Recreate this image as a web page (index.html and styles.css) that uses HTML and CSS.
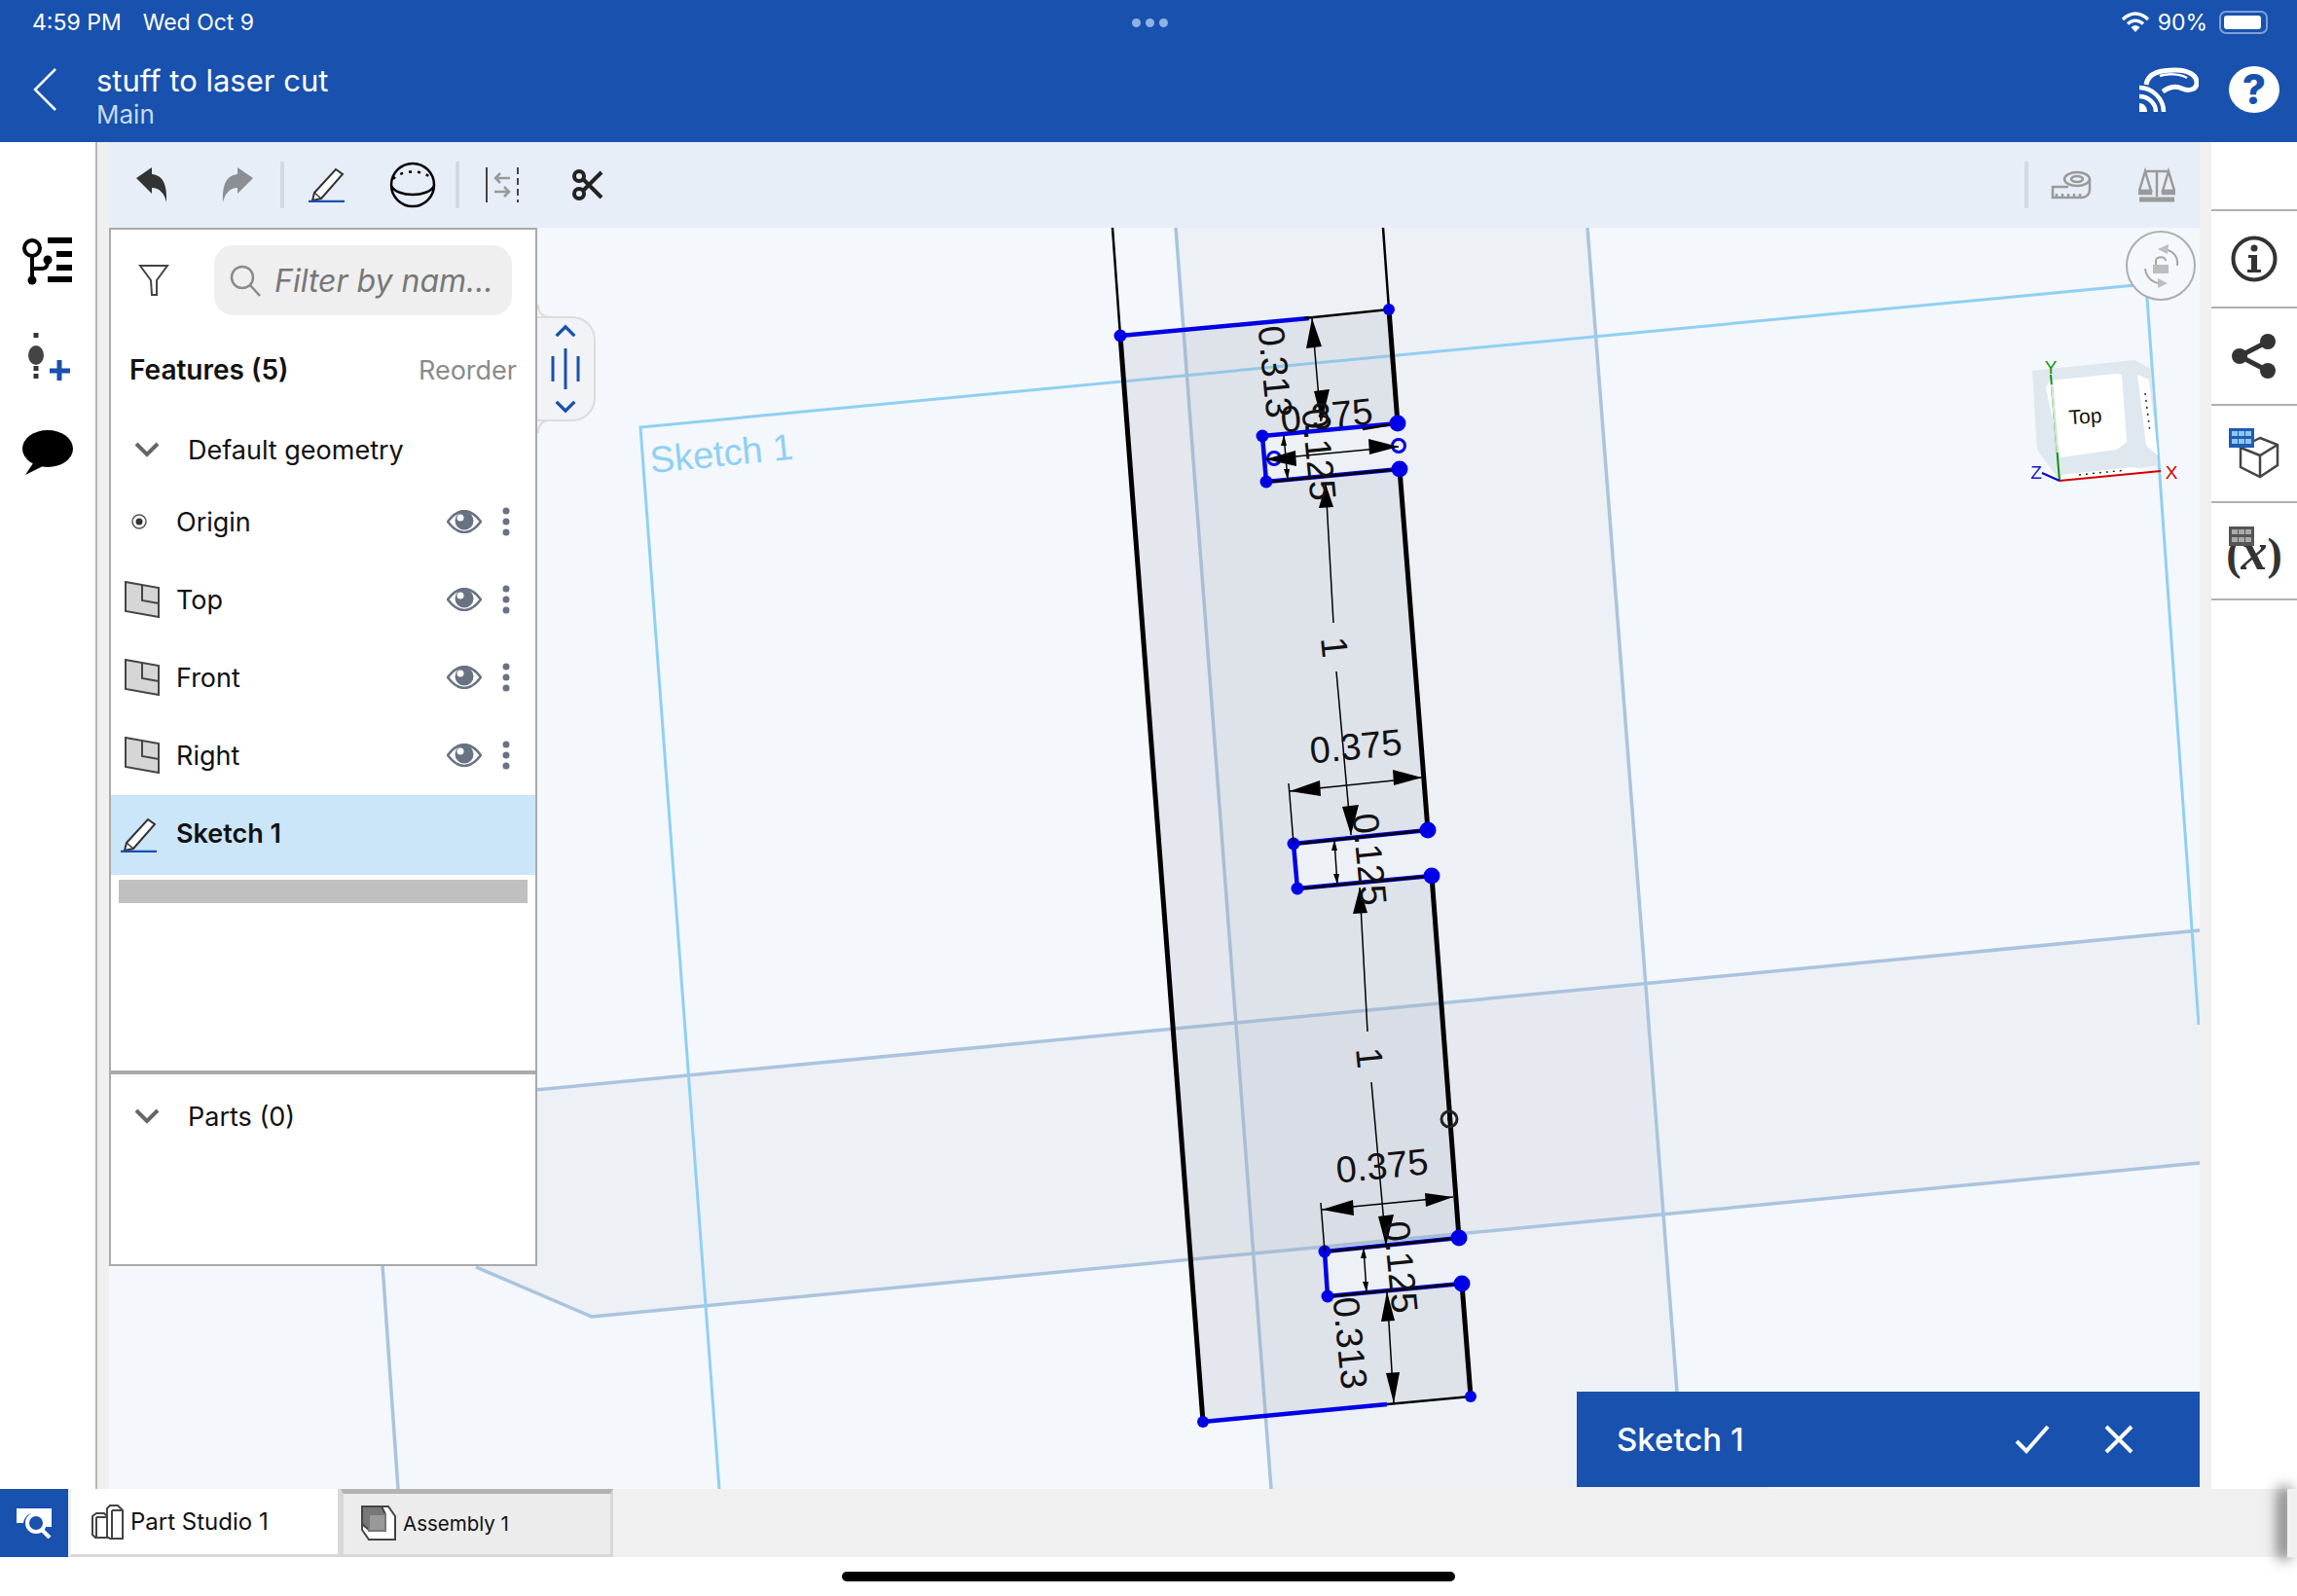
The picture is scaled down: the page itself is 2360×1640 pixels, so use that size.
FILE: index.html
```html
<!DOCTYPE html>
<html lang="en">
<head>
    <meta charset="UTF-8">
    <title>stuff to laser cut</title>
    <link rel="stylesheet" href="styles.css">
</head>
<body>
    <svg class="defs" width="0" height="0">
        <symbol id="eye" viewBox="0 0 36 24">
            <path d="M1 12C7 4 12 1 18 1s11 3 17 11c-6 8-11 11-17 11S7 20 1 12Z" fill="#fff" stroke="#687282" stroke-width="2.500"/>
            <circle cx="18" cy="11" r="9.500" fill="#687282"/>
            <circle cx="14" cy="8" r="3.500" fill="#fff"/>
        </symbol>
        <symbol id="dots" viewBox="0 0 8 30">
            <circle cx="4" cy="4" r="3.500" fill="#687282"/>
            <circle cx="4" cy="15" r="3.500" fill="#687282"/>
            <circle cx="4" cy="26" r="3.500" fill="#687282"/>
        </symbol>
        <symbol id="plane" viewBox="0 0 36 38">
            <path d="M1 1 35 7V37L1 31Z" fill="#d6d6d6" stroke="#444" stroke-width="2"/>
            <path d="M18 4V20L35 23" fill="none" stroke="#444" stroke-width="2"/>
        </symbol>
        <symbol id="pencil" viewBox="0 0 38 36">
            <path d="M6 26 28 2l7 5-22 25-9 2Z" fill="#fff" stroke="#333" stroke-width="2"/>
            <path d="M6 26l7 6" stroke="#333" stroke-width="1.500"/>
            <path d="M0 35H37" stroke="#1851ae" stroke-width="2.500"/>
        </symbol>
        <symbol id="chevron" viewBox="0 0 26 16">
            <path d="M2 2 13 13 24 2" fill="none" stroke="currentColor" stroke-width="4"/>
        </symbol>
    </svg>

    <div class="app">
        <header class="topbar">
            <div class="status">
                <div class="status-left"><span>4:59 PM</span><span>Wed Oct 9</span></div>
                <div class="status-dots"><i></i><i></i><i></i></div>
                <div class="status-right">
                    <svg width="30" height="22" viewBox="0 0 30 22"><path d="M2 8C10 0 20 0 28 8M7 12.500C12 8 18 8 23 12.500" fill="none" stroke="#fff" stroke-width="3.400"/><path d="M10.500 16C13 13.500 17 13.500 19.500 16L15 21Z" fill="#fff"/></svg>
                    <span>90%</span>
                    <div class="battery"><b></b></div>
                </div>
            </div>
            <div class="titlebar">
                <svg class="back" width="26" height="46" viewBox="0 0 26 46"><path d="M24 2 3 23 24 44" fill="none" stroke="#fff" stroke-width="2.500"/></svg>
                <div class="doc">
                    <div class="doc-name">stuff to laser cut</div>
                    <div class="doc-branch">Main</div>
                </div>
                <svg class="cast" width="62" height="46" viewBox="0 0 62 46">
                    <path d="M8 18C10 5 24 3 38 3c13 0 22 5 22 13 0 7-8 9-15 6-7-3-12-2-20 3" fill="none" stroke="#fff" stroke-width="5"/>
                    <path d="M22 9C30 6 44 7 50 11" fill="none" stroke="#fff" stroke-width="2.500"/>
                    <path d="M1 21C14 21 26 32 26 46M1 30C10 30 18 37 18 46" fill="none" stroke="#fff" stroke-width="4.500"/>
                    <path d="M1 37C6 37 9 41 9 46H1Z" fill="#fff"/>
                </svg>
                <div class="help">?</div>
            </div>
        </header>

        <main class="workspace">
            <nav class="left-rail">
                <svg width="54" height="50" viewBox="0 0 54 50">
                    <circle cx="11" cy="12" r="8" fill="none" stroke="#000" stroke-width="4"/>
                    <path d="M11 20V45M11 33H22C26 33 27 30 27 24" fill="none" stroke="#000" stroke-width="4"/>
                    <circle cx="11" cy="45" r="4.500"/><circle cx="27" cy="24" r="4.500"/>
                    <path d="M27 1H52V7H27ZM36 15H52V21H36ZM36 29H52V35H36ZM27 41H52V47H27Z"/>
                </svg>
                <svg width="54" height="50" viewBox="0 0 54 50">
                    <path d="M15 0V7M15 34V50" stroke="#333" stroke-width="5" stroke-dasharray="5 3"/>
                    <ellipse cx="15" cy="23" rx="8" ry="10" fill="#444"/>
                    <path d="M39 28V49M29 39H50" stroke="#1851ae" stroke-width="5"/>
                </svg>
                <svg width="54" height="48" viewBox="0 0 54 48">
                    <ellipse cx="27" cy="20" rx="26" ry="19"/>
                    <path d="M14 32 4 47 26 36Z"/>
                </svg>
            </nav>
            <div class="gutter"></div>

            <section class="center">
                <div class="toolbar">
                    <div class="tool">
                        <svg width="34" height="38" viewBox="0 0 34 38"><path d="M1 12 17 1V8C28 9 33 18 32 37 30 28 25 22 17 22V28Z" fill="#333"/></svg>
                    </div>
                    <div class="tool">
                        <svg width="34" height="38" viewBox="0 0 34 38"><path d="M33 12 17 1V8C6 9 1 18 2 37 4 28 9 22 17 22V28Z" fill="#8b8e92"/></svg>
                    </div>
                    <div class="tool-sep"></div>
                    <div class="tool"><svg width="38" height="36"><use href="#pencil"/></svg></div>
                    <div class="tool">
                        <svg width="48" height="48" viewBox="0 0 48 48" fill="none" stroke="#000" stroke-width="2.500">
                            <circle cx="24" cy="24" r="22"/>
                            <path d="M2 25C8 37 40 37 46 25"/>
                            <path d="M4 18C12 8 36 8 44 18" stroke-dasharray="3 6"/>
                        </svg>
                    </div>
                    <div class="tool-sep"></div>
                    <div class="tool">
                        <svg width="36" height="38" viewBox="0 0 36 38" fill="none">
                            <path d="M2 1V37" stroke="#444" stroke-width="2"/>
                            <path d="M34 1V37" stroke="#444" stroke-width="2" stroke-dasharray="7 4"/>
                            <path d="M26 12H11M16 7l-5 5 5 5M10 26H25M20 21l5 5-5 5" stroke="#999" stroke-width="2.500"/>
                        </svg>
                    </div>
                    <div class="tool">
                        <svg width="32" height="32" viewBox="0 0 32 32" fill="none" stroke="#222" stroke-width="4">
                            <circle cx="7" cy="7" r="5"/><circle cx="7" cy="25" r="5"/>
                            <path d="M11 10 30 29M11 22 30 3"/>
                        </svg>
                    </div>
                    <div class="toolbar-right">
                        <div class="tool-sep"></div>
                        <div class="tool">
                            <svg width="42" height="30" viewBox="0 0 42 30" fill="none" stroke="#9a9a9a" stroke-width="2.500">
                                <ellipse cx="27" cy="9" rx="13" ry="7"/>
                                <ellipse cx="27" cy="9" rx="6" ry="3"/>
                                <path d="M40 9V20C40 25 36 28 32 28H2V17H18M6 28V24M12 28V24M18 28V24M24 28V24M30 28V24"/>
                            </svg>
                        </div>
                        <div class="tool">
                            <svg width="38" height="36" viewBox="0 0 38 36" fill="none" stroke="#9a9a9a" stroke-width="2.500">
                                <path d="M19 3V30M6 4H32M1 24 7 4 13 24ZM25 24 31 4 37 24Z"/>
                                <path d="M1 24H13V27H1ZM25 24H37V27H25Z" fill="#9a9a9a"/>
                                <path d="M1 33H37" stroke-width="5"/>
                            </svg>
                        </div>
                    </div>
                </div>

                <div class="canvas">
                    <svg class="scene" viewBox="112 234 2148 1296">
                        <!-- planes -->
                        <path class="shade" d="M1208 234 1306 1530H1818L1723 1430 1631 234Z"/>
                        <path class="shade" d="M300 1144 2260 956V1195L608 1353 489 1302Z"/>
                        <path class="plane-line" d="M1208 234 1306 1530M1631 234 1723 1430M300 1144 2260 956M489 1302 608 1353 2260 1195M393 1300 409 1530"/>
                        <path class="sketch-plane" d="M739 1530 658 439 2205 292 2259 1053"/>
                        <text class="plane-label" transform="translate(669 486) rotate(-5.600)">Sketch 1</text>

                        <!-- sketch profile -->
                        <path class="profile-fill" d="M1151 345 1427 318 1436 435 1297 448 1301 495 1438 482 1467 853 1329 867 1333 913 1471 900 1499 1272 1361 1286 1364 1332 1502 1319 1511 1435 1236 1461Z"/>
                        <g class="blue-edge">
                            <path d="M1151 345 1345 327M1297 448 1436 435M1297 448 1301 495 1438 482"/>
                            <path d="M1329 867 1467 853M1329 867 1333 913 1471 900"/>
                            <path d="M1361 1286 1499 1272M1361 1286 1364 1332 1502 1319"/>
                            <path d="M1236 1461 1425 1443"/>
                        </g>
                        <path class="edge-thin" d="M1143 234 1151 345M1421 234 1427 318M1340 327 1427 318M1400 441 1436 435M1305 495 1438 482M1333 867 1467 853M1337 913 1471 900M1365 1286 1499 1272M1368 1332 1502 1319M1425 1443 1511 1435"/>
                        <path class="edge-thick" d="M1151 345 1236 1461M1427 318 1436 435M1438 482 1467 853M1471 900 1499 1272M1502 1319 1511 1435"/>

                        <g class="points">
                            <circle cx="1151" cy="345" r="6.500"/><circle cx="1427" cy="318" r="6"/>
                            <circle cx="1436" cy="435" r="8.500"/><circle cx="1438" cy="482" r="8.500"/>
                            <circle cx="1297" cy="448" r="6.500"/><circle cx="1301" cy="495" r="6.500"/>
                            <circle cx="1467" cy="853" r="8.500"/><circle cx="1471" cy="900" r="8.500"/>
                            <circle cx="1329" cy="867" r="6.500"/><circle cx="1333" cy="913" r="6.500"/>
                            <circle cx="1499" cy="1272" r="8.500"/><circle cx="1502" cy="1319" r="8.500"/>
                            <circle cx="1361" cy="1286" r="6.500"/><circle cx="1364" cy="1332" r="6.500"/>
                            <circle cx="1511" cy="1435" r="6"/><circle cx="1236" cy="1461" r="6"/>
                        </g>
                        <circle class="ring-blue" cx="1437" cy="458" r="6.500"/>
                        <circle class="ring-blue" cx="1309" cy="471" r="6.500"/>
                        <circle class="ring-black" cx="1489" cy="1150" r="8"/>
                        <circle cx="1489" cy="1150" r="2"/>

                        <!-- dimensions -->
                        <path class="dim" d="M1348 327 1357 433M1300 472 1437 459M1319 447 1323 493M1362 497 1370 640M1373 690 1388 858"/>
                        <path class="dim" d="M1325 813 1461 799M1324 805 1329 867M1371 863 1374 909M1397 912 1405 1060M1409 1112 1424 1280"/>
                        <path class="dim" d="M1358 1243 1493 1230M1357 1236 1361 1286M1401 1282 1404 1328M1425 1327 1432 1442"/>
                        <path d="M1437 459 1406 451 1407 467ZM1300 472 1331 463 1332 479ZM1348 327 1342 358 1358 356ZM1358 433 1350 402 1366 400ZM1362 497 1355 522 1370 521ZM1388 858 1379 829 1396 827Z"/>
                        <path d="M1325 813 1356 802 1357 818ZM1461 799 1431 791 1432 807ZM1397 912 1390 939 1405 938ZM1424 1280 1416 1250 1432 1248Z"/>
                        <path d="M1358 1243 1390 1233 1391 1249ZM1493 1230 1464 1226 1465 1240ZM1425 1327 1419 1358 1433 1357ZM1432 1442 1424 1411 1438 1410Z"/>
                        <path d="M1319 447 1316 458 1322 458ZM1323 493 1319 482 1325 482ZM1371 863 1368 874 1374 874ZM1374 909 1370 898 1376 898ZM1401 1282 1398 1293 1404 1293ZM1404 1328 1400 1317 1406 1317Z"/>

                        <g class="dim-text">
                            <text transform="translate(1363 427) rotate(-5.600)">0.375</text>
                            <text transform="translate(1393 767) rotate(-5.600)">0.375</text>
                            <text transform="translate(1420 1198) rotate(-5.600)">0.375</text>
                            <text transform="translate(1355 467) rotate(84.400)">0.125</text>
                            <text transform="translate(1407 883) rotate(84.400)">0.125</text>
                            <text transform="translate(1439 1302) rotate(84.400)">0.125</text>
                            <text transform="translate(1310 382) rotate(84.400)">0.313</text>
                            <text transform="translate(1387 1380) rotate(84.400)">0.313</text>
                            <text transform="translate(1371 665) rotate(84.400)">1</text>
                            <text transform="translate(1407 1087) rotate(84.400)">1</text>
                        </g>

                        <!-- rotation lock -->
                        <ellipse class="lock" cx="2220" cy="273" rx="35" ry="35"/>
                        <path class="lock-arrows" d="M2222 256C2234 257 2238 265 2237 273M2204 276C2205 285 2212 292 2222 291"/>
                        <path class="lock-head" d="M2217 256 2228 251 2227 261ZM2227 291 2217 296 2217 286ZM2212 272H2228V281H2212Z"/>
                        <path class="lock-arrows" d="M2215 272V268C2215 263 2225 263 2225 268"/>

                        <!-- view cube -->
                        <path class="cube" d="M2088 381 2193 370 2210 379 2217 478 2116 494 2093 462Z"/>
                        <path class="cube-face" d="M2106 391 2174 384 2180 385 2185 454 2175 462 2117 470 2102 398Z"/>
                        <path class="cube-face" d="M2196 385 2208 390 2217 468 2205 458Z"/>
                        <path class="cube-face" d="M2118 488 2190 480 2212 484 2118 494Z"/>
                        <text class="cube-label" transform="translate(2143 435) rotate(-4)">Top</text>
                        <path class="cube-marks" d="M2204 404 2209 444M2136 488 2184 483"/>
                        <path class="axis-y" d="M2107 385 2116 494"/>
                        <path class="axis-y-fade" d="M2108 395 2114 465"/>
                        <path class="axis-x" d="M2116 494 2220 484"/>
                        <path class="axis-z" d="M2116 494 2098 486"/>
                        <text class="axis-label green" x="2107" y="384">Y</text>
                        <text class="axis-label red" x="2231" y="492">X</text>
                        <text class="axis-label navy" x="2092" y="492">Z</text>
                    </svg>

                    <aside class="panel">
                        <div class="feature-list">
                            <div class="filter-row">
                                <svg class="filter-icon" width="32" height="34" viewBox="0 0 32 34"><path d="M2 2H30L19 17V32H14L13 17Z" fill="#fff" stroke="#444" stroke-width="2"/></svg>
                                <div class="search">
                                    <svg width="34" height="34" viewBox="0 0 34 34" fill="none" stroke="#8a8a8a" stroke-width="2.500"><circle cx="14" cy="14" r="11"/><path d="M22 22 32 33"/></svg>
                                    <span>Filter by nam...</span>
                                </div>
                            </div>
                            <div class="features-head"><b>Features (5)</b><span>Reorder</span></div>
                            <div class="default-row">
                                <svg class="chev" width="26" height="16"><use href="#chevron"/></svg>
                                <span>Default geometry</span>
                            </div>
                            <div class="row">
                                <span class="row-icon"><svg width="18" height="18" viewBox="0 0 18 18"><circle cx="9" cy="9" r="7" fill="none" stroke="#555" stroke-width="1.500"/><circle cx="9" cy="9" r="3.500" fill="#333"/></svg></span>
                                <span class="row-name">Origin</span>
                                <svg class="eye" width="36" height="24"><use href="#eye"/></svg>
                                <svg class="dots" width="8" height="30"><use href="#dots"/></svg>
                            </div>
                            <div class="row">
                                <span class="row-icon plane-icon"><svg width="36" height="38"><use href="#plane"/></svg></span>
                                <span class="row-name">Top</span>
                                <svg class="eye" width="36" height="24"><use href="#eye"/></svg>
                                <svg class="dots" width="8" height="30"><use href="#dots"/></svg>
                            </div>
                            <div class="row">
                                <span class="row-icon plane-icon"><svg width="36" height="38"><use href="#plane"/></svg></span>
                                <span class="row-name">Front</span>
                                <svg class="eye" width="36" height="24"><use href="#eye"/></svg>
                                <svg class="dots" width="8" height="30"><use href="#dots"/></svg>
                            </div>
                            <div class="row">
                                <span class="row-icon plane-icon"><svg width="36" height="38"><use href="#plane"/></svg></span>
                                <span class="row-name">Right</span>
                                <svg class="eye" width="36" height="24"><use href="#eye"/></svg>
                                <svg class="dots" width="8" height="30"><use href="#dots"/></svg>
                            </div>
                            <div class="row row-active">
                                <span class="row-icon plane-icon"><svg width="38" height="36"><use href="#pencil"/></svg></span>
                                <span class="row-name">Sketch 1</span>
                            </div>
                            <div class="rollback"></div>
                        </div>
                        <div class="parts">
                            <div class="default-row">
                                <svg class="chev" width="26" height="16"><use href="#chevron"/></svg>
                                <span>Parts (0)</span>
                            </div>
                        </div>
                    </aside>

                    <div class="handle">
                        <svg class="handle-chev" width="22" height="14" viewBox="0 0 26 16"><path d="M2 14 13 3 24 14" fill="none" stroke="#1851ae" stroke-width="4"/></svg>
                        <svg width="30" height="42" viewBox="0 0 30 42"><path d="M2 8V34M15 0V42M28 8V34" fill="none" stroke="#1851ae" stroke-width="3"/></svg>
                        <svg class="handle-chev" width="22" height="14" viewBox="0 0 26 16"><path d="M2 2 13 13 24 2" fill="none" stroke="#1851ae" stroke-width="4"/></svg>
                    </div>

                    <div class="sketch-bar">
                        <span class="sketch-title">Sketch 1</span>
                        <svg width="36" height="30" viewBox="0 0 36 30"><path d="M2 17 12 27 34 2" fill="none" stroke="#fff" stroke-width="4"/></svg>
                        <svg class="sketch-close" width="30" height="30" viewBox="0 0 30 30"><path d="M2 2 28 28M28 2 2 28" fill="none" stroke="#fff" stroke-width="4"/></svg>
                    </div>
                </div>
            </section>

            <div class="gutter"></div>
            <nav class="right-rail">
                <div class="rail-cell rail-empty"></div>
                <div class="rail-cell">
                    <svg width="48" height="48" viewBox="0 0 48 48"><circle cx="24" cy="24" r="21.500" fill="none" stroke="#333" stroke-width="4"/><circle cx="24" cy="13" r="3.500" fill="#333"/><path d="M18 20H27V35H31V38H17V35H21V23H18Z" fill="#333"/></svg>
                </div>
                <div class="rail-cell">
                    <svg width="48" height="48" viewBox="0 0 48 48"><path d="M38 9 9 24 38 39" fill="none" stroke="#333" stroke-width="5"/><circle cx="38" cy="9" r="8" fill="#333"/><circle cx="9" cy="24" r="8" fill="#333"/><circle cx="38" cy="39" r="8" fill="#333"/></svg>
                </div>
                <div class="rail-cell">
                    <svg width="52" height="52" viewBox="0 0 52 52">
                        <path d="M32 10 50 17V38L32 50 12 40V20Z M12 20 32 28 50 17M32 28V50" fill="#fff" stroke="#444" stroke-width="2.500"/>
                        <rect x="0" y="0" width="26" height="20" fill="#1f5cb5"/>
                        <path d="M3 3H9V8H3ZM10 3H16V8H10ZM17 3H23V8H17ZM3 11H9V16H3ZM10 11H16V16H10ZM17 11H23V16H17Z" fill="#8fc7f2"/>
                    </svg>
                </div>
                <div class="rail-cell fx-cell">
                    <svg class="fx-grid" width="26" height="20" viewBox="0 0 26 20"><rect width="26" height="20" fill="#555"/><path d="M3 3H9V8H3ZM10 3H16V8H10ZM17 3H23V8H17ZM3 11H9V16H3ZM10 11H16V16H10ZM17 11H23V16H17Z" fill="#aaa"/></svg>
                    <span class="fx-text">(<i>x</i>)</span>
                </div>
            </nav>
        </main>

        <footer class="tabs">
            <div class="tab-search">
                <svg width="36" height="32" viewBox="0 0 36 32"><path d="M0 1H36V20H30C30 10 24 6 17 6 12 6 8 10 7 16H0Z" fill="#fff"/><circle cx="20" cy="16" r="9" fill="none" stroke="#fff" stroke-width="4"/><path d="M26 23 34 31" stroke="#fff" stroke-width="4"/></svg>
            </div>
            <div class="tab tab-on">
                <svg width="34" height="36" viewBox="0 0 34 36" fill="#fff" stroke="#444" stroke-width="2">
                    <path d="M2 12 6 9H14L17 12V34H5L2 31Z"/><path d="M6 13H17M6 13V34"/>
                    <path d="M17 4 20 1H28L33 6V35H20L17 33Z"/><path d="M22 6H33M22 6V35"/>
                </svg>
                <span>Part Studio 1</span>
            </div>
            <div class="tab tab-off">
                <svg width="36" height="36" viewBox="0 0 36 36" stroke="#444" stroke-width="2">
                    <path d="M1 1H28L35 11V35H8L1 25Z" fill="#fff"/>
                    <path d="M1 1H21L25 9V25H8L1 19Z" fill="#777"/>
                    <path d="M8 9H25V26H8Z" fill="#999" stroke="#777"/>
                </svg>
                <span>Assembly 1</span>
            </div>
            <div class="tab-edge"></div>
        </footer>
        <div class="home-strip"><div class="home-bar"></div></div>
    </div>
</body>
</html>
```

FILE: styles.css
```css
* {
    box-sizing: border-box;
}

body {
    margin: 0;
    background-color: #fff;
    font-family: Inter, "Noto Sans", sans-serif;
    color: #111;
}

.defs {
    position: absolute;
}

.app {
    display: flex;
    flex-direction: column;
    width: 2360px;
    height: 1640px;
    overflow: hidden;
}

/* Top blue bar */
.topbar {
    height: 146px;
    background-color: #1851ae;
    color: #fff;
    flex: none;
}

.status {
    display: grid;
    grid-template-columns: 1fr auto 1fr;
    align-items: center;
    height: 46px;
    padding: 0 30px 0 33px;
    font-size: 23px;
}

.status-left {
    display: flex;
    gap: 22px;
}

.status-dots {
    display: flex;
    gap: 5px;
}

.status-dots i {
    width: 9px;
    height: 9px;
    border-radius: 50%;
    background-color: #8fb2e6;
}

.status-right {
    display: flex;
    align-items: center;
    justify-content: flex-end;
    gap: 8px;
}

.battery {
    position: relative;
    width: 50px;
    height: 24px;
    margin-left: 4px;
    padding: 3px;
    border: 2px solid #7f9fd6;
    border-radius: 7px;
}

.battery b {
    display: block;
    width: 38px;
    height: 14px;
    background-color: #fff;
    border-radius: 3px;
}

.titlebar {
    display: flex;
    align-items: center;
    height: 100px;
    padding: 0 18px 8px 33px;
}

.back {
    margin-right: 40px;
}

.doc {
    flex: 1;
    padding-top: 14px;
}

.doc-name {
    font-size: 31px;
    line-height: 38px;
}

.doc-branch {
    font-size: 26px;
    line-height: 32px;
    color: #c9d8f0;
}

.cast {
    margin-right: 31px;
}

.help {
    width: 52px;
    height: 48px;
    border-radius: 50%;
    background-color: #fff;
    color: #1851ae;
    font-size: 42px;
    font-weight: 800;
    line-height: 48px;
    text-align: center;
}

/* Middle */
.workspace {
    display: flex;
    height: 1384px;
    flex: none;
}

.left-rail {
    display: flex;
    flex-direction: column;
    align-items: center;
    gap: 49px;
    width: 98px;
    padding-top: 97px;
    flex: none;
}

.gutter {
    width: 12px;
    flex: none;
    background-color: #f0f0f0;
}

.left-rail + .gutter {
    width: 14px;
    border-left: 2px solid #b5b5b5;
}

.center {
    display: flex;
    flex-direction: column;
    flex: 1;
    min-width: 0;
}

.toolbar {
    display: flex;
    align-items: center;
    height: 88px;
    flex: none;
    background-color: #e8eef7;
}

.tool {
    display: flex;
    align-items: center;
    justify-content: center;
    width: 88px;
    height: 88px;
}

.tool-sep {
    width: 4px;
    height: 48px;
    background-color: #cfdae6;
}

.toolbar-right {
    display: flex;
    align-items: center;
    margin-left: auto;
}

.canvas {
    position: relative;
    flex: 1;
    background-color: #f4f7fb;
    overflow: hidden;
}

.scene {
    position: absolute;
    left: 0;
    top: 0;
    width: 2148px;
    height: 1296px;
}

.shade {
    fill: #b4b9c8;
    fill-opacity: 0.1;
}

.plane-line {
    fill: none;
    stroke: #a9c4de;
    stroke-width: 3.500;
}

.sketch-plane {
    fill: none;
    stroke: #8fd0f3;
    stroke-width: 3;
}

.plane-label {
    font-family: "Liberation Sans", sans-serif;
    font-size: 38px;
    fill: #8fd0f3;
}

.profile-fill {
    fill: #a3acba;
    fill-opacity: 0.2;
}

.blue-edge path {
    fill: none;
    stroke: #0000e6;
    stroke-width: 4.500;
}

.edge-thin {
    fill: none;
    stroke: #000;
    stroke-width: 2.500;
}

.edge-thick {
    fill: none;
    stroke: #000;
    stroke-width: 5;
}

.points circle {
    fill: #0000e6;
}

.ring-blue {
    fill: none;
    stroke: #0000e6;
    stroke-width: 3;
}

.ring-black {
    fill: none;
    stroke: #222;
    stroke-width: 3;
}

.dim {
    fill: none;
    stroke: #000;
    stroke-width: 1.500;
}

.dim-text text {
    font-family: "Liberation Sans", sans-serif;
    font-size: 38px;
    fill: #111;
    text-anchor: middle;
    dominant-baseline: central;
}

.lock {
    fill: #f4f7fb;
    stroke: #adadad;
    stroke-width: 2;
}

.lock-arrows {
    fill: none;
    stroke: #a5a5a5;
    stroke-width: 2;
}

.lock-head {
    fill: #bdbdbd;
}

.cube {
    fill: #dfe7ef;
}

.cube-face {
    fill: #fff;
}

.cube-label {
    font-family: "Liberation Sans", sans-serif;
    font-size: 21px;
    text-anchor: middle;
    fill: #111;
}

.cube-marks {
    fill: none;
    stroke: #222;
    stroke-width: 1.500;
    stroke-dasharray: 2 5;
}

.axis-y {
    stroke: #0a960a;
    stroke-width: 2;
}

.axis-y-fade {
    stroke: #cfe6cf;
    stroke-width: 2.500;
}

.axis-x {
    stroke: #d40000;
    stroke-width: 2;
}

.axis-z {
    stroke: #0000d0;
    stroke-width: 2;
}

.axis-label {
    font-family: "Liberation Sans", sans-serif;
    font-size: 19px;
    text-anchor: middle;
}

.green {
    fill: #0a960a;
}

.red {
    fill: #d40000;
}

.navy {
    fill: #1414d0;
}

/* Feature panel */
.panel {
    position: absolute;
    left: 0;
    top: 0;
    display: flex;
    flex-direction: column;
    width: 440px;
    height: 1067px;
    background-color: #fff;
    border: 2px solid #aaa;
    font-size: 27px;
}

.feature-list {
    height: 864px;
    flex: none;
}

.filter-row {
    display: flex;
    align-items: center;
    height: 104px;
    padding: 16px 15px 16px 28px;
}

.filter-icon {
    margin-right: 46px;
}

.search {
    display: flex;
    align-items: center;
    gap: 13px;
    width: 306px;
    height: 72px;
    padding-left: 15px;
    border-radius: 20px;
    background-color: #efefef;
    color: #777;
    font-size: 32px;
    font-style: italic;
    white-space: nowrap;
    overflow: hidden;
}

.features-head {
    display: flex;
    align-items: center;
    justify-content: space-between;
    height: 80px;
    padding: 0 19px 0 19px;
    font-size: 28px;
}

.features-head b {
    font-weight: 600;
}

.features-head span {
    color: #8a8a8a;
    font-size: 27px;
}

.default-row {
    display: flex;
    align-items: center;
    height: 76px;
    padding: 8px 0 0 24px;
}

.chev {
    margin-right: 29px;
    color: #666;
}

.row {
    display: flex;
    align-items: center;
    height: 80px;
    padding-right: 26px;
}

.row-icon {
    display: flex;
    justify-content: center;
    width: 67px;
    flex: none;
    padding-left: 16px;
    padding-right: 25px;
}

.row-icon.plane-icon {
    justify-content: flex-start;
    padding: 0 0 0 14px;
}

.row-name {
    flex: 1;
    padding-top: 1px;
}

.eye {
    margin-right: 21px;
}

.row-active {
    height: 82px;
    margin-top: 1px;
    background-color: #cbe5f9;
    font-weight: 600;
}

.row-active .row-icon {
    padding-left: 10px;
}

.row-active .row-name {
    padding-bottom: 4px;
}

.rollback {
    height: 24px;
    margin: 5px 8px 0;
    background-color: #c0c0c0;
}

.parts {
    flex: 1;
    border-top: 4px solid #aaa;
}

.parts .default-row {
    height: 78px;
}

/* Collapse handle */
.handle {
    position: absolute;
    left: 440px;
    top: 91px;
    display: flex;
    flex-direction: column;
    align-items: center;
    justify-content: space-between;
    width: 60px;
    height: 108px;
    padding: 6px 0;
    background-color: #f1f3f6;
    border: 2px solid #dcdcdc;
    border-left: none;
    border-radius: 0 24px 24px 0;
}

.handle::before,
.handle::after {
    content: "";
    position: absolute;
    left: 0;
    width: 12px;
    height: 12px;
    border-left: 2px solid #dcdcdc;
}

.handle::before {
    top: -14px;
    border-bottom: 2px solid #dcdcdc;
    border-bottom-left-radius: 12px;
}

.handle::after {
    bottom: -14px;
    border-top: 2px solid #dcdcdc;
    border-top-left-radius: 12px;
}

.sketch-bar {
    position: absolute;
    right: 0;
    bottom: 2px;
    display: flex;
    align-items: center;
    width: 640px;
    height: 98px;
    padding-left: 41px;
    background-color: #1851ae;
    color: #fff;
    font-size: 33px;
    font-weight: 500;
}

.sketch-title {
    width: 409px;
}

.sketch-close {
    margin-left: 56px;
}

/* Right rail */
.right-rail {
    width: 88px;
    flex: none;
}

.rail-cell {
    display: flex;
    align-items: center;
    justify-content: center;
    height: 100px;
    border-bottom: 2px solid #b0b0b0;
}

.rail-empty {
    height: 71px;
}

.fx-cell {
    position: relative;
}

.fx-grid {
    position: absolute;
    left: 18px;
    top: 24px;
}

.fx-text {
    font-family: "Liberation Serif", serif;
    font-size: 46px;
    font-weight: 700;
    color: #333;
    margin-top: 4px;
}

.fx-text i {
    font-size: 54px;
    line-height: 1;
}

/* Bottom tabs */
.tabs {
    display: flex;
    height: 70px;
    flex: none;
    background-color: #f0f0f0;
}

.tab-search {
    display: flex;
    align-items: center;
    justify-content: center;
    width: 70px;
    background-color: #1851ae;
}

.tab {
    display: flex;
    align-items: center;
    height: 70px;
}

.tab-on {
    gap: 7px;
    width: 280px;
    padding-left: 20px;
    background-color: #fff;
    border-bottom: 3px solid #d8d8d8;
    border-right: 3px solid #d8d8d8;
    border-left: 3px solid #f0f0f0;
    font-size: 24px;
}

.tab-off {
    gap: 7px;
    width: 280px;
    padding-left: 18px;
    padding-bottom: 2px;
    background-color: #ececec;
    border-top: 5px solid #b3b3b3;
    border-right: 3px solid #d8d8d8;
    border-bottom: 3px solid #d8d8d8;
    border-left: 3px solid #d8d8d8;
    font-size: 20.500px;
}

.tab-edge {
    width: 10px;
    margin-left: auto;
    background-color: #f0f0f0;
    box-shadow: -8px 0 14px 2px #7d7d7d;
}

.home-strip {
    display: flex;
    justify-content: center;
    padding-top: 15px;
}

.home-bar {
    width: 630px;
    height: 10px;
    border-radius: 5px;
    background-color: #000;
}
```
